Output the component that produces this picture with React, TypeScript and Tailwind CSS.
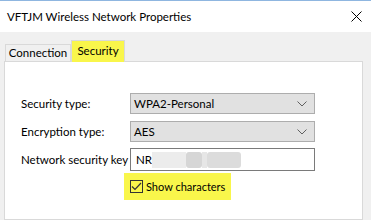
import React from 'react';

// Windows-style "Wireless Network Properties" dialog, Security tab

const font = { fontFamily: 'Lato, "Liberation Sans", Arial, sans-serif' };

const Chevron = () => (
  <svg width="10" height="6" viewBox="0 0 10 6" className="shrink-0">
    <path d="M0.5 0.5 L5 5 L9.5 0.5" fill="none" stroke="#606060" strokeWidth="1" />
  </svg>
);

const Select = ({ value }: { value: string }) => (
  <div className="w-[185px] h-[21px] bg-[#e1e1e1] border border-[#adadad] flex items-center justify-between pl-[3px] pr-[7px] text-black">
    <span>{value}</span>
    <Chevron />
  </div>
);

export default function App() {
  return (
    <div className="w-[371px] h-[220px] overflow-hidden flex flex-col bg-[#f0f0f0] whitespace-nowrap text-[11.5px] leading-[14px]" style={font}>
      {/* Title bar */}
      <div className="h-[32px] bg-white border-t border-[#8fb6e0] flex items-center justify-between pl-[7px] pr-[9px] shrink-0">
        <span className="text-[11.5px] text-black">VFTJM Wireless Network Properties</span>
        <svg width="11" height="11" viewBox="0 0 11 11">
          <path d="M0.5 0.5 L10.5 10.5 M10.5 0.5 L0.5 10.5" stroke="#000" strokeWidth="1" />
        </svg>
      </div>

      {/* Body */}
      <div className="flex-1 flex flex-col pl-[4px] pr-[8px] pt-[8px]">
        {/* Tabs */}
        <div className="flex items-end h-[21px] pl-[1px] shrink-0">
          <div className="w-[66px] h-[17px] border border-b-0 border-[#d9d9d9] bg-[#f0f0f0] flex items-center justify-center text-black">
            Connection
          </div>
          <div className="relative z-10 -mb-px w-[54px] h-[22px] border border-b-0 border-[#d9d9d9] bg-[#f9f64b] flex items-start justify-center pt-[3px] text-black">
            Security
          </div>
        </div>

        {/* Panel */}
        <div className="flex-1 bg-white border border-[#d9d9d9] pl-[16px] pt-[31px] flex flex-col text-black">
          <div className="flex items-center">
            <span className="w-[109px]">Security type:</span>
            <Select value="WPA2-Personal" />
          </div>
          <div className="flex items-center mt-[7px]">
            <span className="w-[109px]">Encryption type:</span>
            <Select value="AES" />
          </div>
          <div className="flex items-center mt-[6px]">
            <span className="w-[109px]">Network security key</span>
            <div className="w-[185px] h-[23px] bg-white border border-[#7a7a7a] flex items-center pl-[5px]">
              <span>NR</span>
              <div className="flex items-center h-[16px]">
                <div className="w-[34px] h-[16px] bg-[#ececec]" />
                <div className="w-[16px] h-[16px] bg-[#d6d6d6] rounded-[3px]" />
                <div className="w-[5px] h-[16px] bg-[#e6e6e6]" />
                <div className="w-[34px] h-[16px] bg-[#dcdcdc] rounded-[3px]" />
              </div>
            </div>
          </div>
          <div className="flex mt-[2px] ml-[103px]">
            <div className="h-[27px] bg-[#f9f64b] flex items-center pl-[6px] pr-[6px] gap-[3px] text-[11px]">
              <div className="w-[13px] h-[13px] border border-[#333] flex items-center justify-center">
                <svg width="11" height="9" viewBox="0 0 11 9">
                  <path d="M1 4.5 L4 7.5 L10 1" fill="none" stroke="#333" strokeWidth="1.2" />
                </svg>
              </div>
              <span>Show characters</span>
            </div>
          </div>
        </div>
      </div>
    </div>
  );
}
